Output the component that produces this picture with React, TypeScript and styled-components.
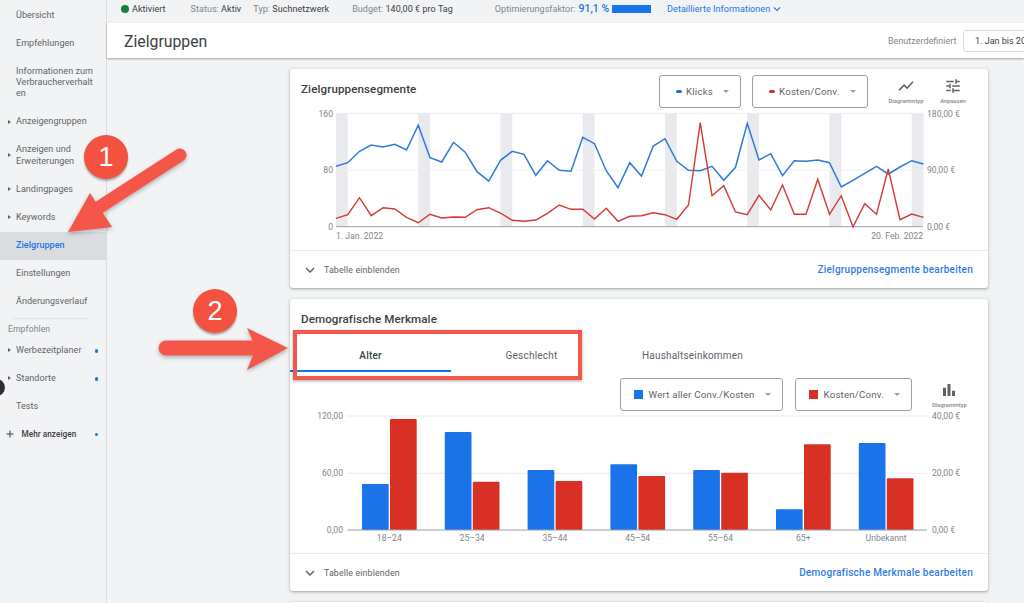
import * as React from 'react';
import styled, { createGlobalStyle } from 'styled-components';
import { MdAdd, MdBarChart, MdExpandMore, MdShowChart, MdTune } from 'react-icons/md';

const GlobalStyle = createGlobalStyle`
  html, body {
    margin: 0;
    width: 1024px;
    height: 603px;
    overflow: hidden;
    background: #f1f3f4;
    font-family: Roboto, 'Liberation Sans', sans-serif;
    color: #5f6368;
  }
  * { box-sizing: border-box; }
`;

const Page = styled.div`
  position: relative;
  display: flex;
  width: 1024px;
  height: 603px;
  overflow: hidden;
`;

const Sidebar = styled.nav`
  flex: 0 0 107px;
  border-right: 1px solid #dadce0;
  padding-top: 1.2px;
`;

const NavRow = styled.div<{ $active?: boolean; $arrow?: boolean; $dot?: boolean }>`
  position: relative;
  padding: 8.4px 0 8.4px 16px;
  font-size: 9px;
  line-height: 11.3px;
  letter-spacing: 0.05px;
  white-space: nowrap;
  color: ${(p) => (p.$active ? '#1a73e8' : '#5f6368')};
  font-weight: ${(p) => (p.$active ? 500 : 400)};
  background: ${(p) => (p.$active ? '#dadce0' : 'transparent')};

  &::before {
    content: '';
    display: ${(p) => (p.$arrow ? 'block' : 'none')};
    position: absolute;
    left: 8px;
    top: 50%;
    margin-top: -2.5px;
    border-left: 3px solid #5f6368;
    border-top: 2.5px solid transparent;
    border-bottom: 2.5px solid transparent;
  }

  &::after {
    content: '';
    display: ${(p) => (p.$dot ? 'block' : 'none')};
    position: absolute;
    left: 94.5px;
    top: 50%;
    margin-top: -1.8px;
    width: 3.6px;
    height: 3.6px;
    border-radius: 50%;
    background: #1a73e8;
  }
`;

const NavDivider = styled.div`
  height: 1px;
  margin: 1.9px 18px 0 12px;
  background: #e3e5e8;
`;

const NavHeading = styled.div`
  padding: 5px 0 1.7px 8px;
  font-size: 8.6px;
  line-height: 11.3px;
  letter-spacing: 0.1px;
  color: #80868b;
`;

const MoreRow = styled(NavRow)`
  display: flex;
  align-items: center;
  gap: 6px;
  height: 27px;
  padding: 0 0 0 3.5px;
  font-size: 8.2px;
  font-weight: 500;
  color: #3c4043;
`;

const Column = styled.div`
  flex: 1;
  min-width: 0;
  display: flex;
  flex-direction: column;
`;

const StatusBar = styled.div`
  flex: 0 0 23px;
  display: flex;
  align-items: center;
  padding: 0 0 5.6px 14px;
  font-size: 9px;
  letter-spacing: 0.05px;
  white-space: nowrap;
`;

const GreenDot = styled.span`
  width: 8px;
  height: 8px;
  margin-right: 3px;
  border-radius: 50%;
  background: #188038;
`;

const Stat = styled.span<{ $gap?: number }>`
  margin-left: ${(p) => p.$gap ?? 0}px;
  color: #80868b;

  b {
    font-weight: 400;
    color: #3c4043;
  }
`;

const Score = styled.span`
  margin-left: 3px;
  font-size: 10.4px;
  font-weight: 500;
  color: #1a73e8;
`;

const ScoreBar = styled.span`
  width: 39px;
  height: 8px;
  margin-left: 3px;
  background: #1a73e8;
`;

const DetailsLink = styled.span`
  margin-left: 16px;
  color: #1a73e8;
`;

const Header = styled.header`
  flex: 0 0 35px;
  display: flex;
  align-items: center;
  padding-left: 17px;
  background: #fff;
  box-shadow: 0 1px 2px rgba(60, 64, 67, 0.45);
  overflow: hidden;
  position: relative;
`;

const PageTitle = styled.h1`
  flex: 0 0 764px;
  margin: 1px 0 0;
  font-size: 15.8px;
  font-weight: 400;
  color: #3c4043;
`;

const RangeLabel = styled.span`
  flex: 0 0 75px;
  font-size: 9px;
  color: #80868b;
`;

const RangeButton = styled.div`
  flex: 0 0 auto;
  height: 22px;
  padding: 0 11px;
  display: flex;
  align-items: center;
  border: 1px solid #dadce0;
  border-radius: 3px;
  font-size: 9px;
  color: #3c4043;
  white-space: nowrap;
`;

const Content = styled.main`
  display: flex;
  flex-direction: column;
  gap: 11px;
  padding: 11px 0 0 183px;
`;

const Card = styled.section`
  flex: 0 0 auto;
  width: 698px;
  background: #fff;
  border-radius: 3px;
  box-shadow: 0 1px 2px rgba(60, 64, 67, 0.3), 0 1px 3px 1px rgba(60, 64, 67, 0.12);
`;

const CardHead = styled.div`
  height: 39px;
  display: flex;
  align-items: center;
  padding-left: 11px;
`;

const CardTitle = styled.h2`
  flex: 1;
  margin: 0;
  font-size: 11.6px;
  font-weight: 500;
  letter-spacing: 0.1px;
  color: #3c4043;
`;

const Select = styled.div<{ $w: number; $gap?: number }>`
  flex: 0 0 ${(p) => p.$w}px;
  height: 33px;
  margin-left: ${(p) => p.$gap ?? 0}px;
  padding: 0 11px 0 13px;
  display: flex;
  align-items: center;
  border: 1px solid #9aa0a6;
  border-radius: 3px;
  font-size: 9.7px;
  letter-spacing: 0.2px;
  color: #5f6368;
  white-space: nowrap;
`;

const HeadSelect = styled(Select)`
  align-self: flex-end;
`;

const DashKey = styled.span<{ $color: string }>`
  width: 6px;
  height: 3px;
  margin: 0 4px 0 3px;
  border-radius: 1.5px;
  background: ${(p) => p.$color};
`;

const SquareKey = styled.span<{ $color: string }>`
  width: 9px;
  height: 9px;
  margin-right: 5.5px;
  background: ${(p) => p.$color};
`;

const Caret = styled.span`
  margin-left: auto;
  border-top: 3.5px solid #9aa0a6;
  border-left: 3.5px solid transparent;
  border-right: 3.5px solid transparent;
`;

const ToolButton = styled.div<{ $gap?: number }>`
  flex: 0 0 47px;
  height: 39px;
  margin-left: ${(p) => p.$gap ?? 0}px;
  display: flex;
  flex-direction: column;
  align-items: center;
  padding-top: 8px;
  font-size: 5.8px;
  font-weight: 500;
  color: #80868b;
  white-space: nowrap;

  svg {
    font-size: 18px;
    color: #5f6368;
    margin-bottom: 3px;
  }
`;

const HeadEnd = styled.div`
  flex: 0 0 11.5px;
`;

const ChartBox = styled.svg`
  display: block;
  width: 698px;
  height: 142px;
`;

const AxisText = styled.text`
  font-family: Roboto, 'Liberation Sans', sans-serif;
  font-size: 8.6px;
  fill: #80868b;
`;

const CardFoot = styled.div`
  height: 38px;
  display: flex;
  align-items: center;
  padding: 0 15px 0 11px;
  border-top: 1px solid #e8eaed;
  font-size: 8.8px;
  letter-spacing: 0.15px;

  svg {
    font-size: 18px;
    color: #5f6368;
    margin-right: 5px;
  }
`;

const FootLink = styled.a`
  margin-left: auto;
  font-size: 10px;
  font-weight: 500;
  letter-spacing: 0.25px;
  color: #2f7de1;
`;

const Tabs = styled.div`
  height: 34px;
  display: flex;
`;

const Tab = styled.div<{ $active?: boolean }>`
  flex: 0 0 161px;
  display: flex;
  align-items: center;
  justify-content: center;
  padding-top: 2px;
  font-size: 10px;
  font-weight: ${(p) => (p.$active ? 500 : 400)};
  letter-spacing: 0.2px;
  color: ${(p) => (p.$active ? '#3c4043' : '#5f6368')};
  border-bottom: 2px solid ${(p) => (p.$active ? '#1a73e8' : 'transparent')};
`;

const Controls = styled.div`
  display: flex;
  height: 33px;
  margin-top: 6px;
  padding-left: 330px;
`;

const BarTool = styled(ToolButton)`
  flex: 0 0 auto;
  margin-left: 20px;
  padding-top: 3px;
`;

const EmptyCard = styled(Card)`
  height: 60px;
`;

const Annotations = styled.svg`
  position: absolute;
  left: 0;
  top: 0;
  width: 1024px;
  height: 603px;
  pointer-events: none;
  filter: drop-shadow(0 2px 2px rgba(0, 0, 0, 0.28));
`;

const Badge = styled.div<{ $x: number; $y: number }>`
  position: absolute;
  left: ${(p) => p.$x - 22}px;
  top: ${(p) => p.$y - 22}px;
  width: 44px;
  height: 44px;
  display: flex;
  align-items: center;
  justify-content: center;
  border-radius: 50%;
  background: #f2523f;
  box-shadow: 0 2px 2px rgba(0, 0, 0, 0.3);
  font-family: 'Liberation Sans', Roboto, sans-serif;
  font-size: 27px;
  color: #fff;
`;

const Highlight = styled.div`
  position: absolute;
  left: 292.5px;
  top: 330px;
  width: 289px;
  height: 50px;
  border: 4px solid #f1594b;
  box-shadow: 0 1px 3px rgba(0, 0, 0, 0.35);
`;

const HelpDot = styled.div`
  position: absolute;
  left: -12.5px;
  top: 379px;
  width: 17px;
  height: 17px;
  border-radius: 50%;
  background: #2e2e30;
`;

const zy = (z: number) => 100 + z / 3;

const blueLine = [199, 188, 154, 135, 141, 133, 150, 76, 173, 186, 127, 157, 215, 243, 181, 154, 163, 226, 182, 211, 214, 112, 131, 212, 263, 188, 228, 138, 116, 184, 211, 212, 199, 241, 202, 70, 180, 161, 227, 182, 184, 180, 188, 261, 241, 220, 199, 222, 201, 182, 192];
const redLine = [355, 344, 293, 347, 323, 327, 352, 368, 343, 354, 351, 352, 329, 323, 339, 361, 364, 360, 340, 315, 328, 328, 357, 325, 364, 349, 347, 338, 344, 358, 315, 68, 287, 257, 336, 344, 286, 330, 255, 343, 343, 238, 343, 287, 380, 311, 343, 207, 359, 342, 352];
const weekends = [0, 7, 14, 21, 28, 35, 42, 49];

const toPoints = (values: number[]) =>
  values.map((z, i) => `${336 + 11.75 * i},${zy(z).toFixed(1)}`).join(' ');

const LineChart = () => (
  <ChartBox viewBox="290 108 698 142">
    {weekends.map((i) => (
      <rect key={i} x={336 + 11.75 * i} y={113} width={11.75} height={113.5} fill="#e8eaed" />
    ))}
    <line x1={336} x2={923} y1={113.3} y2={113.3} stroke="#eceef0" />
    <line x1={336} x2={923} y1={170} y2={170} stroke="#eceef0" />
    <line x1={336} x2={923} y1={226.7} y2={226.7} stroke="#9aa0a6" />
    <polyline points={toPoints(blueLine)} fill="none" stroke="#2f78dc" strokeWidth={1.5} />
    <polyline points={toPoints(redLine)} fill="none" stroke="#d53a32" strokeWidth={1.4} />
    <AxisText x={333} y={116.5} textAnchor="end">160</AxisText>
    <AxisText x={333} y={173} textAnchor="end">80</AxisText>
    <AxisText x={333} y={230} textAnchor="end">0</AxisText>
    <AxisText x={927} y={116.5}>180,00 €</AxisText>
    <AxisText x={927} y={173}>90,00 €</AxisText>
    <AxisText x={927} y={230}>0,00 €</AxisText>
    <AxisText x={336} y={239}>1. Jan. 2022</AxisText>
    <AxisText x={923} y={239} textAnchor="end">20. Feb. 2022</AxisText>
  </ChartBox>
);

const ageGroups = [
  { label: '18–24', blue: 484, red: 419 },
  { label: '25–34', blue: 432, red: 481.7 },
  { label: '35–44', blue: 470, red: 481 },
  { label: '45–54', blue: 464.3, red: 476 },
  { label: '55–64', blue: 470, red: 472.7 },
  { label: '65+', blue: 509.3, red: 444.3 },
  { label: 'Unbekannt', blue: 443, red: 478.3 },
];

const BarChart = () => (
  <ChartBox viewBox="290 411 698 142">
    <line x1={347.5} x2={927} y1={416} y2={416} stroke="#e8eaed" />
    <line x1={347.5} x2={927} y1={473.3} y2={473.3} stroke="#e8eaed" />
    {ageGroups.map((g, i) => {
      const x = 362 + 82.8 * i;
      return (
        <g key={g.label}>
          <rect x={x} y={g.blue} width={26.7} height={530 - g.blue} rx={1} fill="#1a73e8" />
          <rect x={x + 28} y={g.red} width={26.7} height={530 - g.red} rx={1} fill="#d93025" />
          <AxisText x={x + 27.3} y={541} textAnchor="middle">{g.label}</AxisText>
        </g>
      );
    })}
    <line x1={347.5} x2={927} y1={530} y2={530} stroke="#9aa0a6" />
    <AxisText x={343} y={419} textAnchor="end">120,00</AxisText>
    <AxisText x={343} y={476} textAnchor="end">60,00</AxisText>
    <AxisText x={343} y={533} textAnchor="end">0,00</AxisText>
    <AxisText x={932} y={419}>40,00 €</AxisText>
    <AxisText x={932} y={476}>20,00 €</AxisText>
    <AxisText x={932} y={533}>0,00 €</AxisText>
  </ChartBox>
);

const App = () => (
  <Page>
    <GlobalStyle />
    <Sidebar>
      <NavRow>Übersicht</NavRow>
      <NavRow>Empfehlungen</NavRow>
      <NavRow>Informationen zum<br />Verbraucherverhalt<br />en</NavRow>
      <NavRow $arrow>Anzeigengruppen</NavRow>
      <NavRow $arrow>Anzeigen und<br />Erweiterungen</NavRow>
      <NavRow $arrow>Landingpages</NavRow>
      <NavRow $arrow>Keywords</NavRow>
      <NavRow $active>Zielgruppen</NavRow>
      <NavRow>Einstellungen</NavRow>
      <NavRow>Änderungsverlauf</NavRow>
      <NavDivider />
      <NavHeading>Empfohlen</NavHeading>
      <NavRow $arrow $dot>Werbezeitplaner</NavRow>
      <NavRow $arrow $dot>Standorte</NavRow>
      <NavRow>Tests</NavRow>
      <MoreRow $dot><MdAdd size={12} />Mehr anzeigen</MoreRow>
    </Sidebar>
    <Column>
      <StatusBar>
        <GreenDot />
        <Stat><b>Aktiviert</b></Stat>
        <Stat $gap={25}>Status: <b>Aktiv</b></Stat>
        <Stat $gap={12}>Typ: <b>Suchnetzwerk</b></Stat>
        <Stat $gap={23}>Budget: <b>140,00 € pro Tag</b></Stat>
        <Stat $gap={42}>Optimierungsfaktor:</Stat>
        <Score>91,1 %</Score>
        <ScoreBar />
        <DetailsLink>Detaillierte Informationen</DetailsLink>
        <MdExpandMore size={14} color="#1a73e8" />
      </StatusBar>
      <Header>
        <PageTitle>Zielgruppen</PageTitle>
        <RangeLabel>Benutzerdefiniert</RangeLabel>
        <RangeButton>1. Jan bis 20. Feb. 2022</RangeButton>
      </Header>
      <Content>
        <Card>
          <CardHead>
            <CardTitle>Zielgruppensegmente</CardTitle>
            <HeadSelect $w={82}>
              <DashKey $color="#1a73e8" />Klicks<Caret />
            </HeadSelect>
            <HeadSelect $w={116} $gap={11}>
              <DashKey $color="#d93025" />Kosten/Conv.<Caret />
            </HeadSelect>
            <ToolButton $gap={14.5}><MdShowChart />Diagrammtyp</ToolButton>
            <ToolButton><MdTune />Anpassen</ToolButton>
            <HeadEnd />
          </CardHead>
          <LineChart />
          <CardFoot>
            <MdExpandMore />Tabelle einblenden
            <FootLink>Zielgruppensegmente bearbeiten</FootLink>
          </CardFoot>
        </Card>
        <Card>
          <CardHead>
            <CardTitle>Demografische Merkmale</CardTitle>
          </CardHead>
          <Tabs>
            <Tab $active>Alter</Tab>
            <Tab>Geschlecht</Tab>
            <Tab>Haushaltseinkommen</Tab>
          </Tabs>
          <Controls>
            <Select $w={163}>
              <SquareKey $color="#1a73e8" />Wert aller Conv./Kosten<Caret />
            </Select>
            <Select $w={117} $gap={12}>
              <SquareKey $color="#d93025" />Kosten/Conv.<Caret />
            </Select>
            <BarTool><MdBarChart />Diagrammtyp</BarTool>
          </Controls>
          <BarChart />
          <CardFoot>
            <MdExpandMore />Tabelle einblenden
            <FootLink>Demografische Merkmale bearbeiten</FootLink>
          </CardFoot>
        </Card>
        <EmptyCard />
      </Content>
    </Column>
    <Highlight />
    <HelpDot />
    <Annotations viewBox="0 0 1024 603">
      <line x1={180} y1={155} x2={98} y2={208} stroke="#f4574a" strokeWidth={13} strokeLinecap="round" />
      <polygon points="68,232 90,193 112,227" fill="#f4574a" />
      <line x1={166} y1={348} x2={258} y2={348} stroke="#f4574a" strokeWidth={15} strokeLinecap="round" />
      <polygon points="288,348 247,328 256,348 247,370" fill="#f4574a" />
    </Annotations>
    <Badge $x={106} $y={157}>1</Badge>
    <Badge $x={215} $y={311}>2</Badge>
  </Page>
);

export default App;
